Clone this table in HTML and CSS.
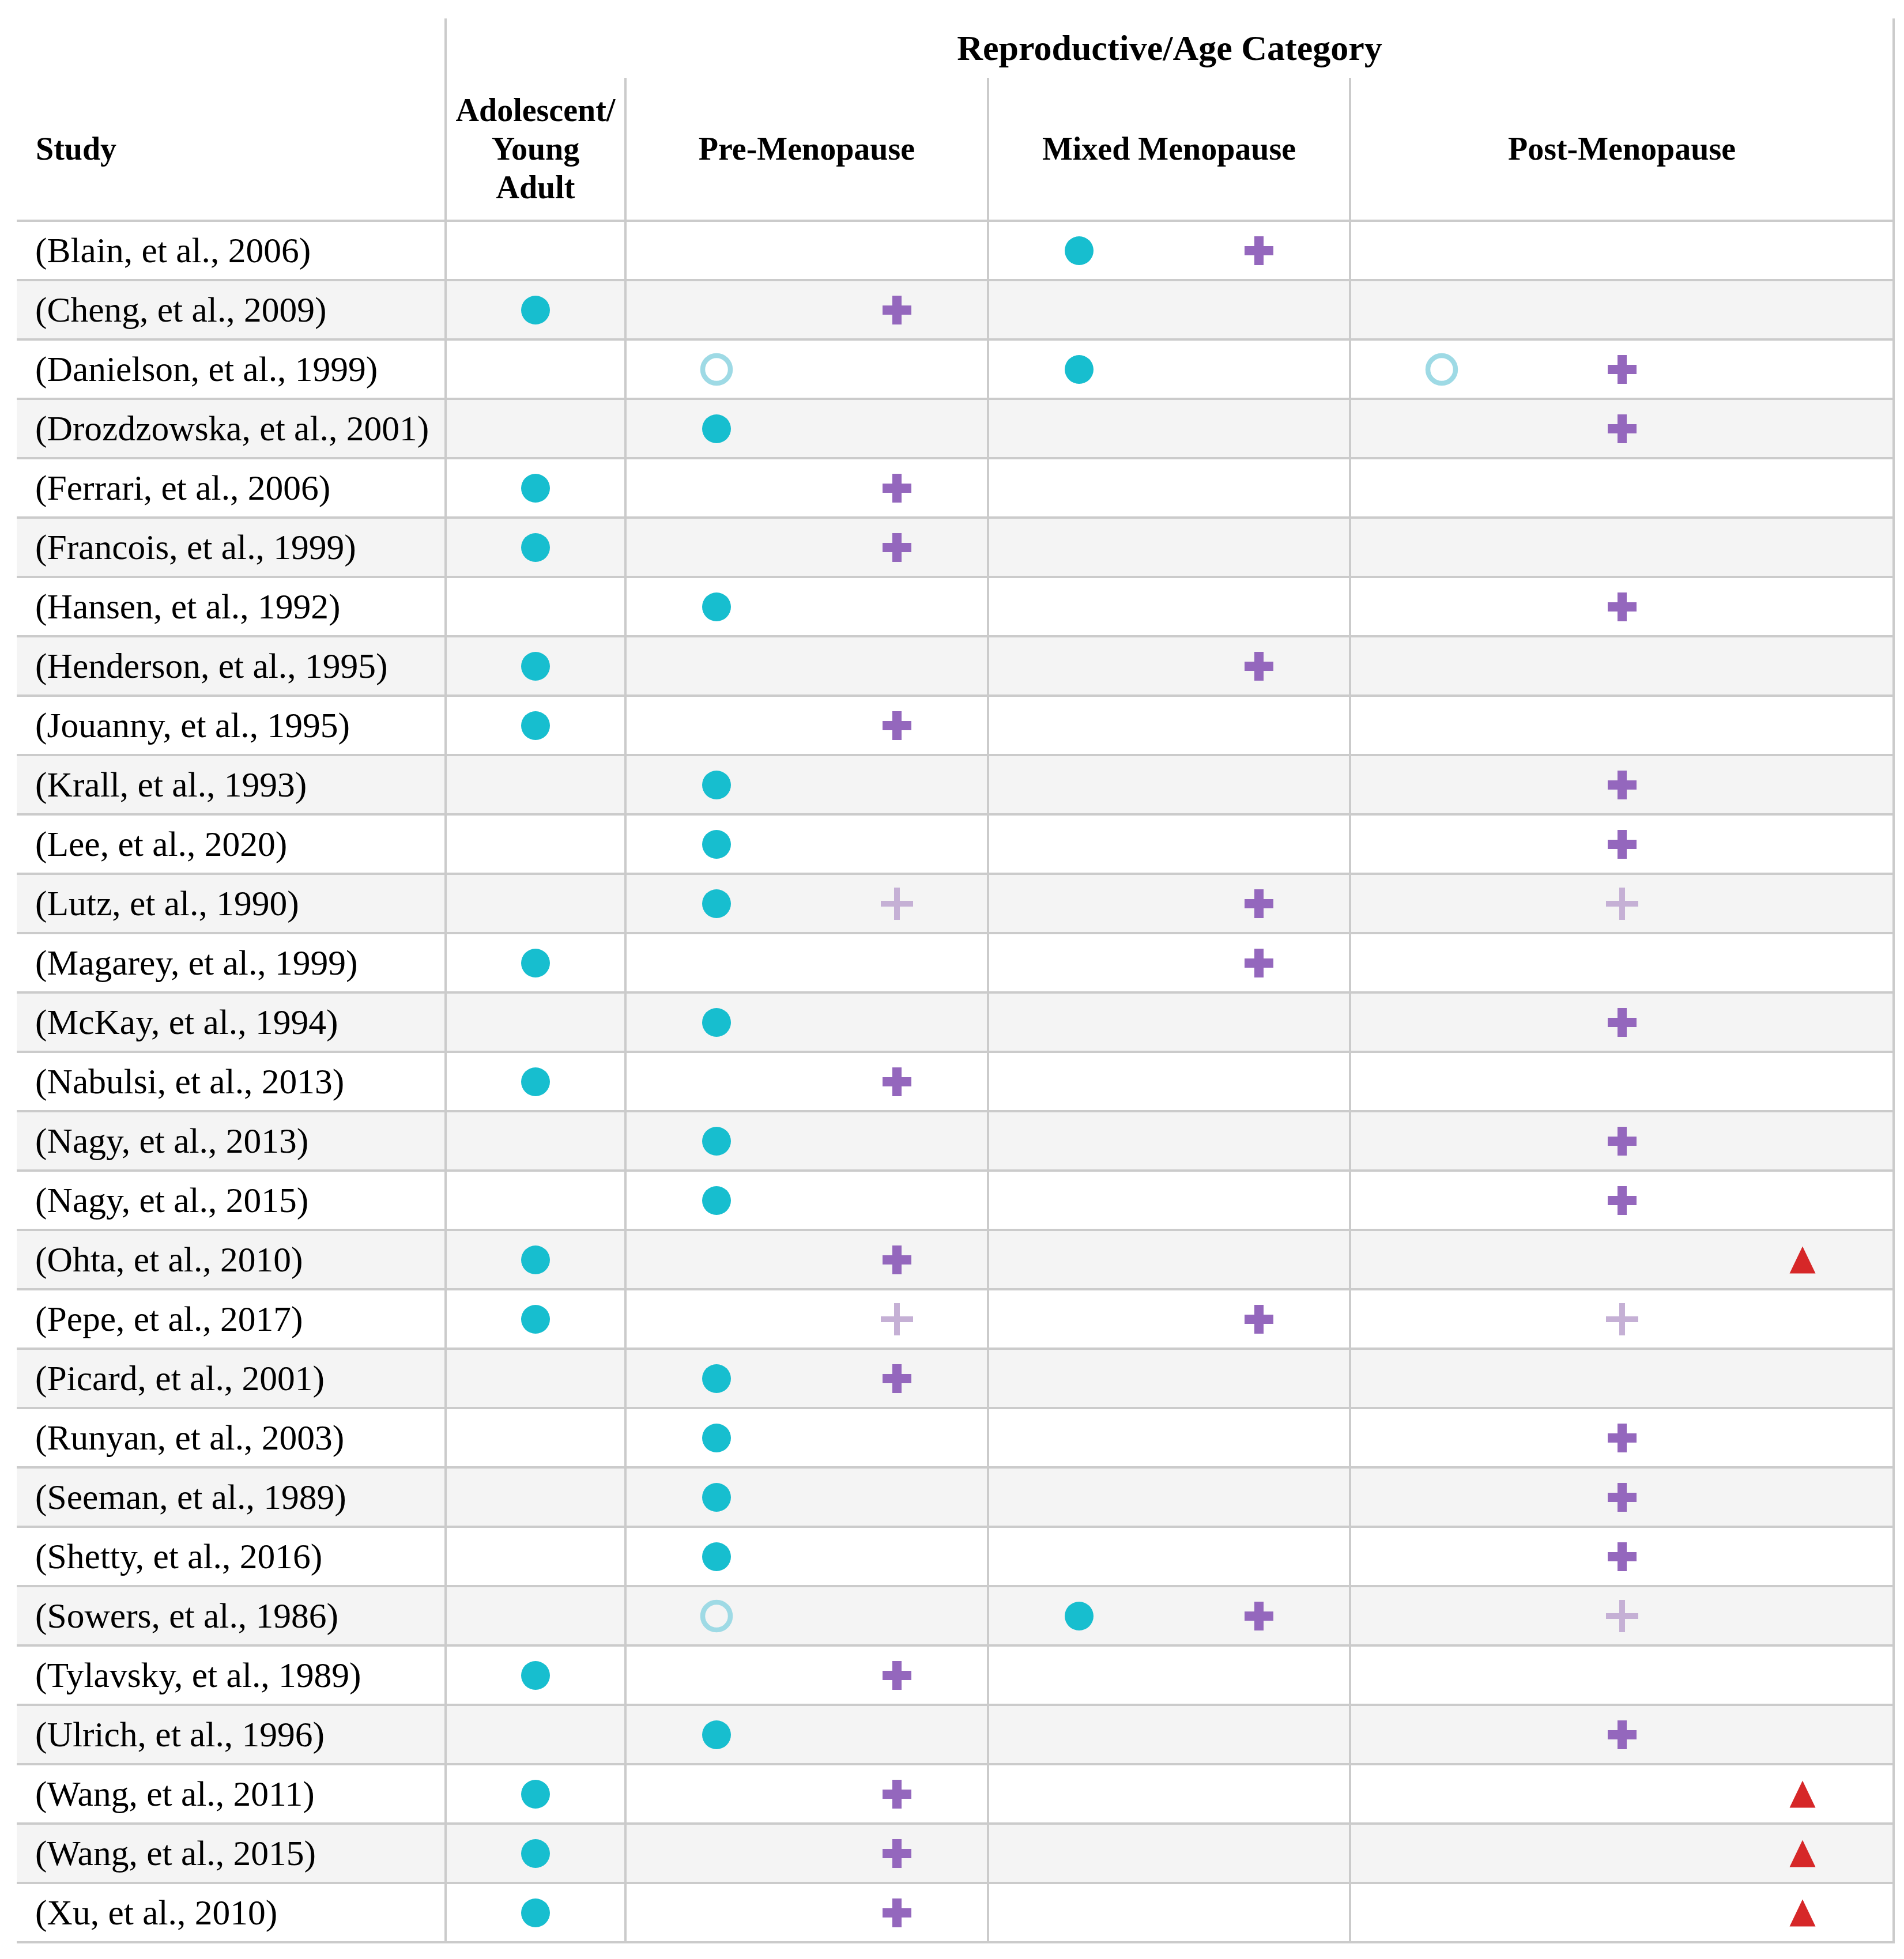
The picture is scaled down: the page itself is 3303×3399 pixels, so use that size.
FILE: index.html
```html
<!DOCTYPE html>
<html lang="en">
<head>
<meta charset="utf-8">
<title>Reproductive/Age Category by Study</title>
<link rel="stylesheet" href="styles.css">
</head>
<body>
<svg class="defs" aria-hidden="true">
  <symbol id="dot" viewBox="0 0 60 60"><circle cx="30" cy="30" r="25" fill="#17becf"/></symbol>
  <symbol id="ring" viewBox="0 0 60 60"><circle cx="30" cy="30" r="24" fill="none" stroke="#9edae5" stroke-width="8.5"/></symbol>
  <symbol id="plus" viewBox="0 0 60 60"><path d="M22 5h16v17h17v16H38v17H22V38H5V22h17z" fill="#9467bd"/></symbol>
  <symbol id="lplus" viewBox="0 0 60 60"><path d="M25 2h10v23h23v10H35v23H25V35H2V25h23z" fill="#c5b0d5"/></symbol>
  <symbol id="tri" viewBox="0 0 60 60"><polygon points="30,6.5 52.5,53.5 7.5,53.5" fill="#d62728"/></symbol>
</svg>
<div class="page">
  <div class="table">
    <div class="head-top">
      <div class="blank"></div>
      <div class="title">Reproductive/Age Category</div>
    </div>
    <div class="head-sub">
      <div class="hstudy">Study</div>
      <div class="hcell">Adolescent/<br>Young<br>Adult</div>
      <div class="hcell">Pre-Menopause</div>
      <div class="hcell">Mixed Menopause</div>
      <div class="hcell last">Post-Menopause</div>
    </div>
    <div class="body">
      <div class="row"><div class="study">(Blain, et al., 2006)</div><div class="cell c1"></div><div class="cell c2"></div><div class="cell c2"><svg class="mk s1"><use href="#dot"/></svg><svg class="mk s2"><use href="#plus"/></svg></div><div class="cell c3 last"></div></div>
      <div class="row"><div class="study">(Cheng, et al., 2009)</div><div class="cell c1"><svg class="mk s1"><use href="#dot"/></svg></div><div class="cell c2"><svg class="mk s2"><use href="#plus"/></svg></div><div class="cell c2"></div><div class="cell c3 last"></div></div>
      <div class="row"><div class="study">(Danielson, et al., 1999)</div><div class="cell c1"></div><div class="cell c2"><svg class="mk s1"><use href="#ring"/></svg></div><div class="cell c2"><svg class="mk s1"><use href="#dot"/></svg></div><div class="cell c3 last"><svg class="mk s1"><use href="#ring"/></svg><svg class="mk s2"><use href="#plus"/></svg></div></div>
      <div class="row"><div class="study">(Drozdzowska, et al., 2001)</div><div class="cell c1"></div><div class="cell c2"><svg class="mk s1"><use href="#dot"/></svg></div><div class="cell c2"></div><div class="cell c3 last"><svg class="mk s2"><use href="#plus"/></svg></div></div>
      <div class="row"><div class="study">(Ferrari, et al., 2006)</div><div class="cell c1"><svg class="mk s1"><use href="#dot"/></svg></div><div class="cell c2"><svg class="mk s2"><use href="#plus"/></svg></div><div class="cell c2"></div><div class="cell c3 last"></div></div>
      <div class="row"><div class="study">(Francois, et al., 1999)</div><div class="cell c1"><svg class="mk s1"><use href="#dot"/></svg></div><div class="cell c2"><svg class="mk s2"><use href="#plus"/></svg></div><div class="cell c2"></div><div class="cell c3 last"></div></div>
      <div class="row"><div class="study">(Hansen, et al., 1992)</div><div class="cell c1"></div><div class="cell c2"><svg class="mk s1"><use href="#dot"/></svg></div><div class="cell c2"></div><div class="cell c3 last"><svg class="mk s2"><use href="#plus"/></svg></div></div>
      <div class="row"><div class="study">(Henderson, et al., 1995)</div><div class="cell c1"><svg class="mk s1"><use href="#dot"/></svg></div><div class="cell c2"></div><div class="cell c2"><svg class="mk s2"><use href="#plus"/></svg></div><div class="cell c3 last"></div></div>
      <div class="row"><div class="study">(Jouanny, et al., 1995)</div><div class="cell c1"><svg class="mk s1"><use href="#dot"/></svg></div><div class="cell c2"><svg class="mk s2"><use href="#plus"/></svg></div><div class="cell c2"></div><div class="cell c3 last"></div></div>
      <div class="row"><div class="study">(Krall, et al., 1993)</div><div class="cell c1"></div><div class="cell c2"><svg class="mk s1"><use href="#dot"/></svg></div><div class="cell c2"></div><div class="cell c3 last"><svg class="mk s2"><use href="#plus"/></svg></div></div>
      <div class="row"><div class="study">(Lee, et al., 2020)</div><div class="cell c1"></div><div class="cell c2"><svg class="mk s1"><use href="#dot"/></svg></div><div class="cell c2"></div><div class="cell c3 last"><svg class="mk s2"><use href="#plus"/></svg></div></div>
      <div class="row"><div class="study">(Lutz, et al., 1990)</div><div class="cell c1"></div><div class="cell c2"><svg class="mk s1"><use href="#dot"/></svg><svg class="mk s2"><use href="#lplus"/></svg></div><div class="cell c2"><svg class="mk s2"><use href="#plus"/></svg></div><div class="cell c3 last"><svg class="mk s2"><use href="#lplus"/></svg></div></div>
      <div class="row"><div class="study">(Magarey, et al., 1999)</div><div class="cell c1"><svg class="mk s1"><use href="#dot"/></svg></div><div class="cell c2"></div><div class="cell c2"><svg class="mk s2"><use href="#plus"/></svg></div><div class="cell c3 last"></div></div>
      <div class="row"><div class="study">(McKay, et al., 1994)</div><div class="cell c1"></div><div class="cell c2"><svg class="mk s1"><use href="#dot"/></svg></div><div class="cell c2"></div><div class="cell c3 last"><svg class="mk s2"><use href="#plus"/></svg></div></div>
      <div class="row"><div class="study">(Nabulsi, et al., 2013)</div><div class="cell c1"><svg class="mk s1"><use href="#dot"/></svg></div><div class="cell c2"><svg class="mk s2"><use href="#plus"/></svg></div><div class="cell c2"></div><div class="cell c3 last"></div></div>
      <div class="row"><div class="study">(Nagy, et al., 2013)</div><div class="cell c1"></div><div class="cell c2"><svg class="mk s1"><use href="#dot"/></svg></div><div class="cell c2"></div><div class="cell c3 last"><svg class="mk s2"><use href="#plus"/></svg></div></div>
      <div class="row"><div class="study">(Nagy, et al., 2015)</div><div class="cell c1"></div><div class="cell c2"><svg class="mk s1"><use href="#dot"/></svg></div><div class="cell c2"></div><div class="cell c3 last"><svg class="mk s2"><use href="#plus"/></svg></div></div>
      <div class="row"><div class="study">(Ohta, et al., 2010)</div><div class="cell c1"><svg class="mk s1"><use href="#dot"/></svg></div><div class="cell c2"><svg class="mk s2"><use href="#plus"/></svg></div><div class="cell c2"></div><div class="cell c3 last"><svg class="mk s3"><use href="#tri"/></svg></div></div>
      <div class="row"><div class="study">(Pepe, et al., 2017)</div><div class="cell c1"><svg class="mk s1"><use href="#dot"/></svg></div><div class="cell c2"><svg class="mk s2"><use href="#lplus"/></svg></div><div class="cell c2"><svg class="mk s2"><use href="#plus"/></svg></div><div class="cell c3 last"><svg class="mk s2"><use href="#lplus"/></svg></div></div>
      <div class="row"><div class="study">(Picard, et al., 2001)</div><div class="cell c1"></div><div class="cell c2"><svg class="mk s1"><use href="#dot"/></svg><svg class="mk s2"><use href="#plus"/></svg></div><div class="cell c2"></div><div class="cell c3 last"></div></div>
      <div class="row"><div class="study">(Runyan, et al., 2003)</div><div class="cell c1"></div><div class="cell c2"><svg class="mk s1"><use href="#dot"/></svg></div><div class="cell c2"></div><div class="cell c3 last"><svg class="mk s2"><use href="#plus"/></svg></div></div>
      <div class="row"><div class="study">(Seeman, et al., 1989)</div><div class="cell c1"></div><div class="cell c2"><svg class="mk s1"><use href="#dot"/></svg></div><div class="cell c2"></div><div class="cell c3 last"><svg class="mk s2"><use href="#plus"/></svg></div></div>
      <div class="row"><div class="study">(Shetty, et al., 2016)</div><div class="cell c1"></div><div class="cell c2"><svg class="mk s1"><use href="#dot"/></svg></div><div class="cell c2"></div><div class="cell c3 last"><svg class="mk s2"><use href="#plus"/></svg></div></div>
      <div class="row"><div class="study">(Sowers, et al., 1986)</div><div class="cell c1"></div><div class="cell c2"><svg class="mk s1"><use href="#ring"/></svg></div><div class="cell c2"><svg class="mk s1"><use href="#dot"/></svg><svg class="mk s2"><use href="#plus"/></svg></div><div class="cell c3 last"><svg class="mk s2"><use href="#lplus"/></svg></div></div>
      <div class="row"><div class="study">(Tylavsky, et al., 1989)</div><div class="cell c1"><svg class="mk s1"><use href="#dot"/></svg></div><div class="cell c2"><svg class="mk s2"><use href="#plus"/></svg></div><div class="cell c2"></div><div class="cell c3 last"></div></div>
      <div class="row"><div class="study">(Ulrich, et al., 1996)</div><div class="cell c1"></div><div class="cell c2"><svg class="mk s1"><use href="#dot"/></svg></div><div class="cell c2"></div><div class="cell c3 last"><svg class="mk s2"><use href="#plus"/></svg></div></div>
      <div class="row"><div class="study">(Wang, et al., 2011)</div><div class="cell c1"><svg class="mk s1"><use href="#dot"/></svg></div><div class="cell c2"><svg class="mk s2"><use href="#plus"/></svg></div><div class="cell c2"></div><div class="cell c3 last"><svg class="mk s3"><use href="#tri"/></svg></div></div>
      <div class="row"><div class="study">(Wang, et al., 2015)</div><div class="cell c1"><svg class="mk s1"><use href="#dot"/></svg></div><div class="cell c2"><svg class="mk s2"><use href="#plus"/></svg></div><div class="cell c2"></div><div class="cell c3 last"><svg class="mk s3"><use href="#tri"/></svg></div></div>
      <div class="row"><div class="study">(Xu, et al., 2010)</div><div class="cell c1"><svg class="mk s1"><use href="#dot"/></svg></div><div class="cell c2"><svg class="mk s2"><use href="#plus"/></svg></div><div class="cell c2"></div><div class="cell c3 last"><svg class="mk s3"><use href="#tri"/></svg></div></div>
    </div>
  </div>
</div>
</body>
</html>
```
FILE: styles.css
```css
* { box-sizing: border-box; }

html, body {
  margin: 0;
  background: #ffffff;
}

body {
  font-family: "Liberation Serif", "Times New Roman", serif;
  color: #000000;
}

.defs {
  display: block;
  width: 0;
  height: 0;
  overflow: hidden;
}

.page {
  padding: 32px 0 0 29px;
}

.table {
  width: 3258px;
}

.head-top,
.head-sub,
.row {
  display: grid;
  grid-template-columns: 742px 312px 629px 628px 947px;
}

.head-top {
  height: 103px;
}

.title {
  grid-column: 2 / 6;
  display: flex;
  align-items: center;
  justify-content: center;
  border-left: 4px solid #cbcbcb;
  border-right: 4px solid #cbcbcb;
  font-weight: bold;
  font-size: 62px;
  white-space: nowrap;
}

.head-sub {
  height: 250px;
  border-bottom: 4px solid #cbcbcb;
}

.hstudy {
  display: flex;
  align-items: center;
  padding-left: 33px;
  font-weight: bold;
  font-size: 56px;
}

.hcell {
  display: flex;
  align-items: center;
  justify-content: center;
  text-align: center;
  border-left: 4px solid #cbcbcb;
  font-weight: bold;
  font-size: 56px;
  line-height: 67px;
  white-space: nowrap;
}

.hcell.last {
  border-right: 4px solid #cbcbcb;
}

.row {
  height: 103px;
  border-bottom: 4px solid #cbcbcb;
}

.body .row:nth-child(even) {
  background: #f4f4f4;
}

.study {
  display: flex;
  align-items: center;
  padding-left: 32px;
  font-size: 61.5px;
  white-space: nowrap;
}

.cell {
  display: grid;
  grid-template-rows: 1fr;
  align-items: center;
  justify-items: center;
  border-left: 4px solid #cbcbcb;
}

.cell.last {
  border-right: 4px solid #cbcbcb;
}

.c1 { grid-template-columns: 1fr; }
.c2 { grid-template-columns: 1fr 1fr; }
.c3 { grid-template-columns: 1fr 1fr 1fr; }

.mk {
  display: block;
  width: 60px;
  height: 60px;
  grid-row: 1;
}

.s1 { grid-column: 1; }
.s2 { grid-column: 2; }
.s3 { grid-column: 3; }
```
